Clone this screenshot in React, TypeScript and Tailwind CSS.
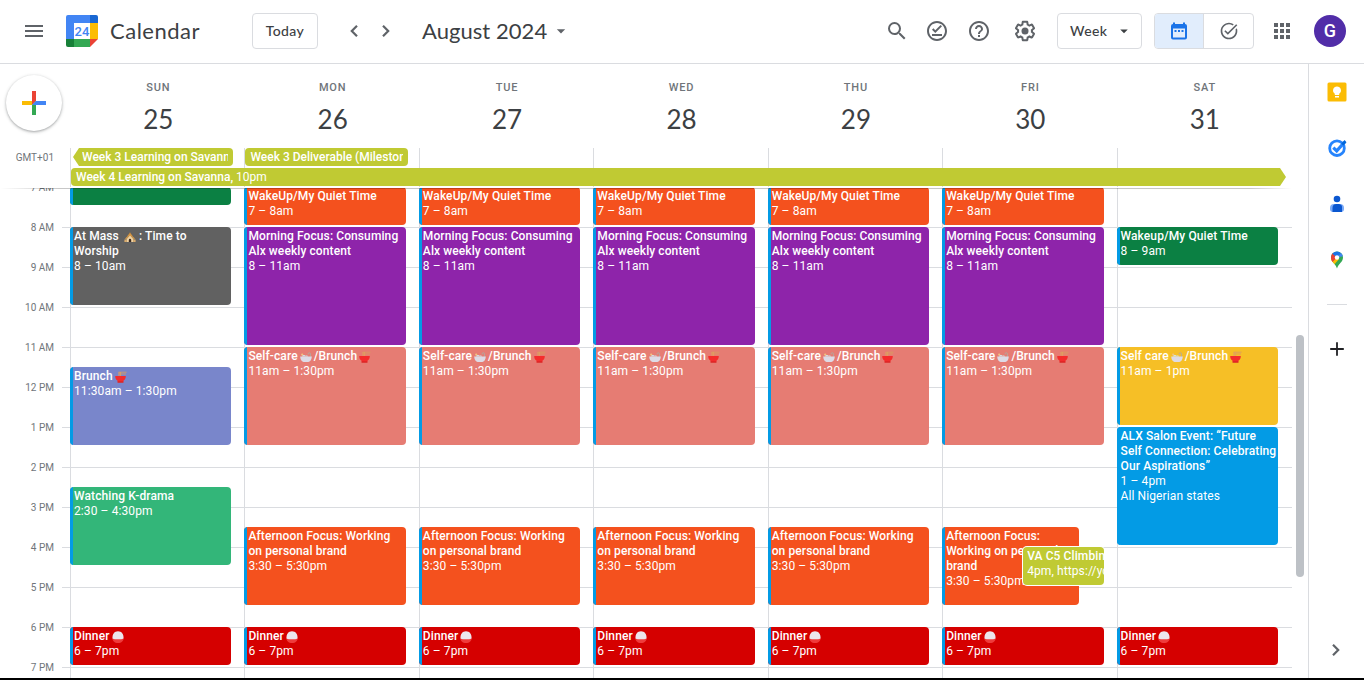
import React from "react";
import {
  MdMenu,
  MdSearch,
  MdOutlineOfflinePin,
  MdHelpOutline,
  MdTaskAlt,
  MdApps,
  MdArrowDropDown,
} from "react-icons/md";

type EventItem = {
  title: React.ReactNode;
  time?: string;
  place?: string;
  start: number;
  end: number;
  color: string;
  stripe?: boolean;
  box?: string;
};

const Church = () => (
  <svg viewBox="0 0 12 12" className="ml-[2px] mr-[3px] inline-block size-3 align-[-3px]">
    <path d="M6 1.2 L8.6 5 H3.4 Z" fill="#c98a3c" />
    <path d="M2.6 8 L6 4.2 L9.4 8 V11 H2.6 Z" fill="#f0d3a2" />
    <path d="M1.6 8 L6 3.6 L10.4 8" stroke="#d69a4a" strokeWidth="1.2" fill="none" />
    <path d="M4.8 11 V8.900 a1.200 1.200 0 0 1 2.400 0 V11 Z" fill="#3a2a22" />
    <path d="M0.4 8.6 H2.8 V11 H0.4 Z M9.2 8.6 H11.6 V11 H9.2 Z" fill="#d9ab6c" />
  </svg>
);

const Noodles = () => (
  <svg viewBox="0 0 12 12" className="ml-[2px] inline-block size-3 align-[-3px]">
    <path d="M3.6 1.2 H11.6 M3.6 3 H11" stroke="#d99a62" strokeWidth="0.9" />
    <path d="M4 1 V5.4 M5.6 1 V5.4" stroke="#e0a060" strokeWidth="0.9" />
    <path d="M0.2 5 H10.8 C10.8 7.6 9.8 9 8.4 9.8 V11.6 H2.6 V9.8 C1.2 9 0.2 7.6 0.2 5 Z" fill="#f42c2c" />
    <path d="M2.6 10.4 H8.4 V11.6 H2.6 Z" fill="#cf2020" />
  </svg>
);

const Bath = () => (
  <svg viewBox="0 0 12 12" className="mx-[2px] inline-block size-3 align-[-3px]">
    <path d="M10.400 6 V2.800 a1.100 1.100 0 0 0 -2.200 0 V3.400" stroke="#b0a9a0" strokeWidth="0.9" fill="none" />
    <circle cx="2.2" cy="3.6" r="1.1" fill="#f3c37f" />
    <path d="M2 5.600 a2 2 0 0 1 3.600 -0.800 a1.600 1.600 0 0 1 2.600 0.800 Z" fill="#cfe6ec" />
    <path d="M0.2 5.400 H11.8 C11.8 8.800 9.800 10.800 8.400 11 H3.600 C2.200 10.800 0.2 8.800 0.2 5.400 Z" fill="#dddbe6" />
  </svg>
);

const Rice = () => (
  <svg viewBox="0 0 12 12" className="ml-[2px] inline-block size-3 align-[-3px]">
    <path d="M0.2 6.400 H11.8 C11.8 9.800 9.400 12 6 12 S0.2 9.800 0.2 6.400 Z" fill="#ef3b3b" />
    <path d="M0.600 7.400 C0 3 2.600 0.200 6 0.200 S12 3 11.400 7.400 C9 8.600 3 8.600 0.600 7.400 Z" fill="#ece6ec" />
  </svg>
);

const ORANGE = "bg-[#f4511e]";
const PURPLE = "bg-[#8e24aa]";
const SALMON = "bg-[#e67c73]";
const RED = "bg-[#d50000]";
const GREEN = "bg-[#0b8043]";
const LIME = "bg-[#c0ca33]";

const dinner: EventItem = { title: <>Dinner<Rice /></>, time: "6 – 7pm", start: 18, end: 19, color: RED };

const weekday = (last: EventItem[]): EventItem[] => [
  { title: "WakeUp/My Quiet Time", time: "7 – 8am", start: 7, end: 8, color: ORANGE },
  { title: "Morning Focus: Consuming Alx weekly content", time: "8 – 11am", start: 8, end: 11, color: PURPLE },
  { title: <>Self-care<Bath />/Brunch<Noodles /></>, time: "11am – 1:30pm", start: 11, end: 13.5, color: SALMON },
  ...last,
  dinner,
];

const afternoon: EventItem = {
  title: "Afternoon Focus: Working on personal brand",
  time: "3:30 – 5:30pm",
  start: 15.5,
  end: 17.5,
  color: ORANGE,
};

const days: { name: string; date: number; events: EventItem[] }[] = [
  {
    name: "SUN",
    date: 25,
    events: [
      { title: "", start: 7, end: 7.5, color: GREEN },
      { title: <>At Mass <Church />: Time to Worship</>, time: "8 – 10am", start: 8, end: 10, color: "bg-[#616161]" },
      { title: <>Brunch<Noodles /></>, time: "11:30am – 1:30pm", start: 11.5, end: 13.5, color: "bg-[#7986cb]" },
      { title: "Watching K-drama", time: "2:30 – 4:30pm", start: 14.5, end: 16.5, color: "bg-[#33b679]" },
      dinner,
    ],
  },
  { name: "MON", date: 26, events: weekday([afternoon]) },
  { name: "TUE", date: 27, events: weekday([afternoon]) },
  { name: "WED", date: 28, events: weekday([afternoon]) },
  { name: "THU", date: 29, events: weekday([afternoon]) },
  {
    name: "FRI",
    date: 30,
    events: weekday([
      { ...afternoon, box: "mr-[25px]" },
      {
        title: "VA C5 Climbing",
        time: "4pm, https://youtube.com",
        start: 16,
        end: 17,
        color: LIME,
        stripe: false,
        box: "ml-[81px] whitespace-nowrap pl-[3px] ring-1 ring-white",
      },
    ]),
  },
  {
    name: "SAT",
    date: 31,
    events: [
      { title: "Wakeup/My Quiet Time", time: "8 – 9am", start: 8, end: 9, color: GREEN },
      { title: <>Self care<Bath />/Brunch<Noodles /></>, time: "11am – 1pm", start: 11, end: 13, color: "bg-[#f6bf26]" },
      {
        title: "ALX Salon Event: “Future Self Connection: Celebrating Our Aspirations”",
        time: "1 – 4pm",
        place: "All Nigerian states",
        start: 13,
        end: 16,
        color: "bg-[#039be5]",
      },
      dinner,
    ],
  },
];

const hours = ["7 AM", "8 AM", "9 AM", "10 AM", "11 AM", "12 PM", "1 PM", "2 PM", "3 PM", "4 PM", "5 PM", "6 PM", "7 PM"];

function EventCard({ event }: { event: EventItem }) {
  const from = (event.start - 7) * 2 + 1;
  const to = (event.end - 7) * 2 + 1;
  const stripe = event.stripe !== false;
  return (
    <div
      className={`col-start-1 mb-[2px] flex min-w-0 overflow-hidden rounded-[4px] text-xs leading-[15px] tracking-[0.1px] text-white ${event.color} ${event.box ?? ""}`}
      style={{ gridRow: `${from} / ${to}` }}
    >
      {stripe && <div className="w-[3px] shrink-0 bg-[#039be5]" />}
      <div className="min-w-0 flex-1 pl-px pt-[2px]">
        <div className="font-medium">{event.title}</div>
        {event.time && <div>{event.time}</div>}
        {event.place && <div>{event.place}</div>}
      </div>
    </div>
  );
}

function Chevron({ d, className }: { d: string; className: string }) {
  return (
    <svg viewBox="0 0 20 20" className={className} fill="none" stroke="currentColor" strokeWidth="2.2">
      <path d={d} />
    </svg>
  );
}

const LEFT = "M13 4.800 L7.800 10 L13 15.200";
const RIGHT = "M7 4.800 L12.200 10 L7 15.200";

function Logo() {
  return (
    <svg viewBox="0 0 32 32" className="size-8">
      <path d="M2 0 H24 V8 H8 V24 H0 V2 A2 2 0 0 1 2 0 Z" fill="#4285f4" />
      <path d="M24 0 H30 A2 2 0 0 1 32 2 V8 H24 Z" fill="#1967d2" />
      <path d="M24 8 H32 V24 H24 Z" fill="#fbbc04" />
      <path d="M0 24 H8 V32 H2 A2 2 0 0 1 0 30 Z" fill="#188038" />
      <path d="M8 24 H24 V32 H8 Z" fill="#34a853" />
      <path d="M24 24 H32 L24 32 Z" fill="#ea4335" />
      <path d="M8 8 H24 V24 H8 Z" fill="#fff" />
      <text x="16" y="20.6" textAnchor="middle" fontSize="13" fontWeight="500" fill="#4285f4" className="font-['Roboto',sans-serif]">24</text>
    </svg>
  );
}

function Gear() {
  return (
    <svg viewBox="0 0 24 24" className="size-6" fill="currentColor">
      <path d="M13.85 22.25h-3.7c-.74 0-1.36-.54-1.45-1.27l-.27-1.89c-.27-.14-.53-.29-.79-.46l-1.8.72c-.7.26-1.47-.03-1.81-.65L2.2 15.53c-.35-.66-.2-1.44.36-1.88l1.53-1.19c-.01-.15-.02-.3-.02-.46 0-.15.01-.31.02-.46l-1.52-1.19c-.59-.45-.74-1.26-.37-1.88l1.85-3.19c.34-.62 1.11-.9 1.79-.63l1.81.73c.26-.17.52-.32.78-.46l.27-1.91c.09-.7.71-1.25 1.44-1.25h3.7c.74 0 1.36.54 1.45 1.27l.27 1.89c.27.14.53.29.79.46l1.8-.72c.71-.26 1.48.03 1.82.65l1.84 3.18c.36.66.2 1.44-.36 1.88l-1.52 1.19c.01.15.02.3.02.46s-.01.31-.02.46l1.52 1.19c.56.45.72 1.23.37 1.86l-1.86 3.22c-.34.62-1.11.9-1.8.63l-1.8-.72c-.26.17-.52.32-.78.46l-.27 1.91c-.1.68-.72 1.22-1.46 1.22zm-3.23-2h2.76l.37-2.55.53-.22c.44-.18.88-.44 1.34-.78l.45-.34 2.38.96 1.38-2.4-2.03-1.58.07-.56c.03-.26.06-.51.06-.78s-.03-.53-.06-.78l-.07-.56 2.03-1.58-1.39-2.4-2.39.96-.45-.35c-.42-.32-.87-.58-1.33-.77l-.52-.22-.37-2.55h-2.76l-.37 2.55-.53.21c-.44.19-.88.44-1.34.79l-.45.33-2.38-.95-1.39 2.39 2.03 1.58-.07.56a7 7 0 0 0-.06.79c0 .26.02.53.06.78l.07.56-2.03 1.58 1.38 2.4 2.39-.96.45.35c.43.33.86.58 1.33.77l.53.22.38 2.55z" />
      <circle cx="12" cy="12" r="3.5" />
    </svg>
  );
}

function Header() {
  return (
    <header className="flex h-16 shrink-0 items-center border-b border-[#dadce0] pb-px font-['Lato',sans-serif] text-[#5f6368]">
      <MdMenu className="ml-[22px] size-6" />
      <div className="ml-5">
        <Logo />
      </div>
      <span className="ml-3 w-[142px] text-[22px] leading-6 tracking-[0.5px] text-[#3c4043]">Calendar</span>
      <button className="flex h-9 w-[66px] items-center justify-center rounded-[4px] border border-[#dadce0] text-sm font-medium tracking-[0.4px] text-[#3c4043]">
        Today
      </button>
      <Chevron d={LEFT} className="ml-[26px] size-5" />
      <Chevron d={RIGHT} className="ml-3 size-5" />
      <span className="ml-[26px] w-[125px] whitespace-nowrap text-[22px] leading-6 tracking-[0.05px] text-[#3c4043]">August 2024</span>
      <MdArrowDropDown className="ml-[4px] size-5" />
      <div className="flex-1" />
      <MdSearch className="size-6" />
      <MdOutlineOfflinePin className="ml-4 size-6" />
      <MdHelpOutline className="ml-[18px] size-6" />
      <div className="ml-[22px]">
        <Gear />
      </div>
      <button className="ml-5 flex h-9 w-[85px] items-center justify-between rounded-[4px] border border-[#dadce0] pl-3 pr-2 text-sm font-medium tracking-[0.4px] text-[#3c4043]">
        Week
        <MdArrowDropDown className="size-[18px]" />
      </button>
      <div className="ml-3 flex h-9 w-[100px] overflow-hidden rounded-[4px] border border-[#dadce0]">
        <div className="flex w-[49px] items-center justify-center border-r border-[#dadce0] bg-[#e1edfc] text-[#1a73e8]">
          <svg viewBox="0 0 20 20" className="size-5" fill="currentColor">
            <path fillRule="evenodd" d="M4 1.5 H6 V3 H14 V1.5 H16 V3 A2 2 0 0 1 18 5 V16.500 A2 2 0 0 1 16 18.500 H4 A2 2 0 0 1 2 16.500 V5 A2 2 0 0 1 4 3 Z M4 7.500 V16.500 H16 V7.500 Z M5.500 9 H7.500 V11 H5.500 Z M9 9 H11 V11 H9 Z M12.500 9 H14.500 V11 H12.500 Z" />
          </svg>
        </div>
        <div className="flex flex-1 items-center justify-center">
          <MdTaskAlt className="size-5" />
        </div>
      </div>
      <MdApps className="ml-4 size-6" />
      <div className="ml-5 mr-[18px] flex size-8 items-center justify-center rounded-full bg-[#512da8] font-['Roboto',sans-serif] text-lg font-medium text-white">
        G
      </div>
    </header>
  );
}

function SidePanel() {
  return (
    <aside className="flex w-14 shrink-0 flex-col items-center border-l border-[#dadce0]">
      <svg viewBox="0 0 20 20" className="mt-[18px] size-5">
        <rect x="0.500" y="0.500" width="19" height="19" rx="1.500" fill="#fbbc04" />
        <path d="M10 4.500 a4 4 0 0 1 2.200 7.300 V13 H7.800 V11.800 A4 4 0 0 1 10 4.500 Z M8 14 H12 V15.500 H8 Z" fill="#fff" />
      </svg>
      <svg viewBox="0 0 20 20" className="mt-9 size-5">
        <circle cx="10" cy="10.200" r="7.300" fill="none" stroke="#2684fc" strokeWidth="2.800" />
        <path d="M6.300 9.600 L9.700 12.900 L17.500 4.200" fill="none" stroke="#2684fc" strokeWidth="3.200" />
        <path d="M14.200 5.800 L17.600 2 L19.500 4.200 L16.400 7.600 Z" fill="#0066da" />
      </svg>
      <svg viewBox="0 0 20 20" className="mt-9 size-5">
        <circle cx="10" cy="5" r="3.300" fill="#0b57d0" />
        <path d="M3 14 a4 4 0 0 1 4 -4 H13 a4 4 0 0 1 4 4 V15 a3 3 0 0 1 -3 3 H6 a3 3 0 0 1 -3 -3 Z" fill="#7baaf7" />
        <path d="M5.500 18 V14 a4 4 0 0 1 4 -4 H12 a3.500 3.500 0 0 1 3 4 V18 Z" fill="#0b57d0" />
      </svg>
      <svg viewBox="0 0 20 20" className="mt-9 size-5">
        <clipPath id="pin">
          <path d="M10 1.500 a6 6 0 0 1 6 6 C16 12 11.500 13.500 10 18.500 C8.500 13.500 4 12 4 7.500 a6 6 0 0 1 6 -6 Z" />
        </clipPath>
        <g clipPath="url(#pin)">
          <rect width="20" height="20" fill="#34a853" />
          <path d="M3 10 L8 5 L12 9 L6 16 Z" fill="#fbbc04" />
          <path d="M3 2 H6 L10 7.500 L5 12.500 L3 10 Z" fill="#ea4335" />
          <path d="M5 3.500 L10 7.500 L15 2 L12 0 H7 Z" fill="#1a73e8" />
          <path d="M10 7.500 L14.500 2.500 L17 6 Z" fill="#4285f4" />
        </g>
        <circle cx="10" cy="7.500" r="2.200" fill="#fff" />
      </svg>
      <div className="mt-[34px] h-px w-5 bg-[#dadce0]" />
      <svg viewBox="0 0 20 20" className="mt-[34px] size-5" stroke="#202124" strokeWidth="1.800">
        <path d="M10 3.200 V16.800 M3.200 10 H16.800" />
      </svg>
      <div className="flex-1" />
      <Chevron d={RIGHT} className="mb-[18px] mr-[2px] size-5 text-[#5f6368]" />
    </aside>
  );
}

export default function App() {
  return (
    <div className="flex h-[680px] w-[1364px] flex-col overflow-hidden border-b-2 border-black bg-white font-['Roboto',sans-serif]">
      <Header />
      <div className="flex min-h-0 flex-1">
        <main className="flex w-[1308px] flex-col">
          <div className="flex h-[84px] shrink-0">
            <div className="w-[71px] shrink-0 pl-[6px] pt-[11px]">
              <button className="flex size-14 items-center justify-center rounded-full bg-white shadow-[0_1px_2px_rgba(60,64,67,0.3),0_1px_3px_1px_rgba(60,64,67,0.15)]">
                <svg viewBox="0 0 24 24" className="size-6">
                  <path d="M10 0 H14 V10 L10 14 Z" fill="#ea4335" />
                  <path d="M0 10 H10 V14 H0 Z" fill="#fbbc04" />
                  <path d="M10 14 L14 10 V24 H10 Z" fill="#34a853" />
                  <path d="M14 10 H24 V14 H10 Z" fill="#4285f4" />
                </svg>
              </button>
            </div>
            <div className="grid w-[1221px] grid-cols-7">
              {days.map((d) => (
                <div key={d.name} className="flex flex-col items-center pt-[18px]">
                  <div className="text-[11px] font-medium leading-3 tracking-[0.8px] text-[#70757a]">{d.name}</div>
                  <div className="mt-[11px] font-['Lato',sans-serif] text-[26px] leading-7 text-[#3c4043]">{d.date}</div>
                </div>
              ))}
            </div>
          </div>

          <div className="flex h-[39px] shrink-0">
            <div className="w-[70px] shrink-0 pr-4 pt-[4px] text-right text-[10px] leading-3 text-[#70757a]">GMT+01</div>
            <div className="grid w-[1221px] grid-cols-7 grid-rows-[20px_19px] text-xs leading-[18px] text-white">
              {days.map((d, i) => (
                <div key={d.name} className="row-span-2 row-start-1 border-l border-[#dadce0]" style={{ gridColumn: i + 1 }} />
              ))}
              <div className="col-start-1 row-start-1 ml-[3px] mr-[11px] h-[18px] overflow-hidden rounded-r-[4px] bg-[#c0ca33] pl-[9px] pr-[5px] [clip-path:polygon(6px_0,100%_0,100%_100%,6px_100%,0_50%)]">
                <div className="overflow-hidden whitespace-nowrap font-medium">Week 3 Learning on Savanna</div>
              </div>
              <div className="col-start-2 row-start-1 ml-px mr-[11px] h-[18px] overflow-hidden rounded-[4px] bg-[#c0ca33] pl-[5px] pr-[5px]">
                <div className="overflow-hidden whitespace-nowrap font-medium">Week 3 Deliverable (Milestone)</div>
              </div>
              <div className="col-span-7 col-start-1 row-start-2 ml-px mr-[5px] h-[18px] rounded-l-[4px] bg-[#c0ca33] pl-[5px] [clip-path:polygon(0_0,calc(100%-6px)_0,100%_50%,calc(100%-6px)_100%,0_100%)]">
                <span className="font-medium">Week 4 Learning on Savanna,</span> 10pm
              </div>
            </div>
          </div>

          <div className="relative flex min-h-0 flex-1 overflow-hidden">
            <div className="w-[62px] shrink-0">
              {hours.map((h) => (
                <div key={h} className="-mt-[5px] mb-[5px] h-10 pr-2 text-right text-[10px] leading-3 text-[#70757a]">
                  {h}
                </div>
              ))}
            </div>
            <div className="mr-px grid w-[1229px] shrink-0 grid-cols-[8px_repeat(7,1fr)] grid-rows-[520px]">
              <div className="col-span-8 col-start-1 row-start-1 -mr-px">
                {hours.map((h) => (
                  <div key={h} className="h-10 border-t border-[#dadce0]" />
                ))}
              </div>
              {days.map((d, i) => (
                <div
                  key={d.name}
                  className="row-start-1 grid grid-cols-1 grid-rows-[repeat(26,20px)] bg-[linear-gradient(90deg,#dadce0_1px,transparent_1px)] pr-[13px]"
                  style={{ gridColumn: i + 2 }}
                >
                  {d.events.map((e, k) => (
                    <EventCard key={k} event={e} />
                  ))}
                </div>
              ))}
            </div>
            <div className="ml-1 mt-[148px] h-[242px] w-2 rounded-full bg-[#bdc1c6]" />
            <div className="absolute left-0 top-0 h-px w-[1292px] bg-white" />
            <div className="absolute left-0 top-px h-px w-[1292px] bg-[linear-gradient(90deg,transparent,rgba(0,0,0,0.22)_60px,rgba(0,0,0,0.22)_1250px,transparent)]" />
          </div>
        </main>
        <SidePanel />
      </div>
    </div>
  );
}
